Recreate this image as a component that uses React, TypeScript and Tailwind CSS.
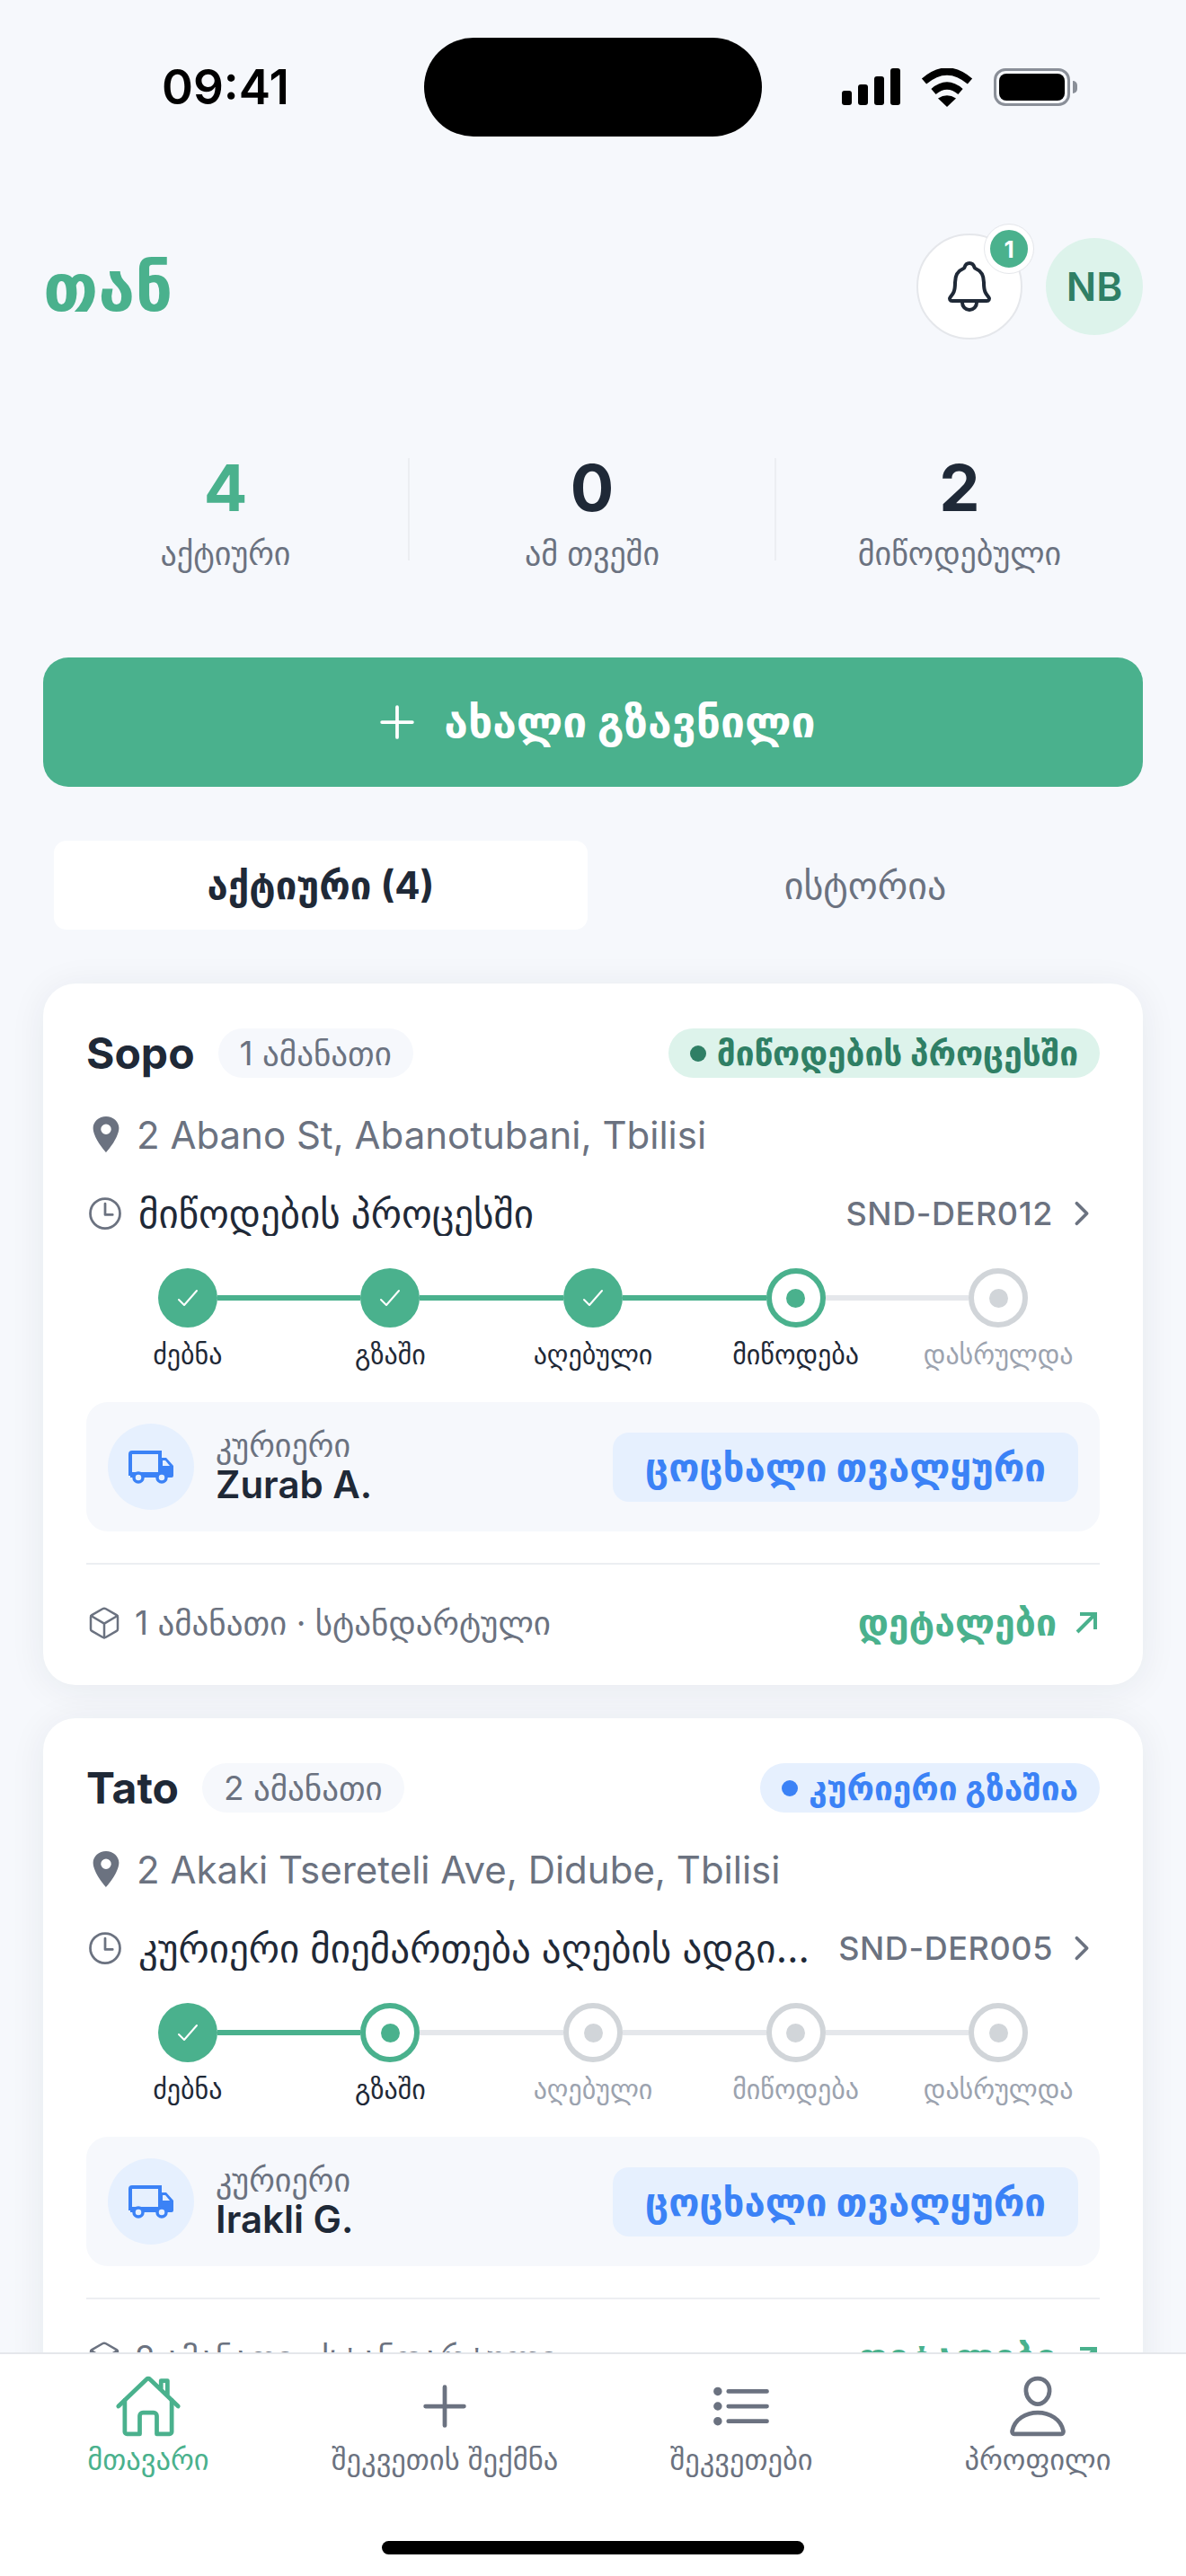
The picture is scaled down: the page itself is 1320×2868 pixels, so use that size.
import { IoAddOutline, IoCheckmarkOutline, IoChevronForward, IoCubeOutline, IoHomeOutline, IoListOutline, IoLocationSharp, IoNotificationsOutline, IoPersonOutline, IoTimeOutline } from "react-icons/io5";

const stepLabels = ["ძებნა", "გზაში", "აღებული", "მიწოდება", "დასრულდა"];

const orders = [
  {
    name: "Sopo",
    count: "1 ამანათი",
    badge: "მიწოდების პროცესში",
    blue: false,
    address: "2 Abano St, Abanotubani, Tbilisi",
    status: "მიწოდების პროცესში",
    code: "SND-DER012",
    active: 3,
    courier: "Zurab A.",
  },
  {
    name: "Tato",
    count: "2 ამანათი",
    badge: "კურიერი გზაშია",
    blue: true,
    address: "2 Akaki Tsereteli Ave, Didube, Tbilisi",
    status: "კურიერი მიემართება აღების ადგილისკენ",
    code: "SND-DER005",
    active: 1,
    courier: "Irakli G.",
  },
];

function StatusBar() {
  return (
    <div className="flex items-center pt-[42px] shrink-0">
      <div className="w-[472px] pl-[180px] text-[53px] font-semibold leading-none text-black">09:41</div>
      <div className="w-[376px] h-[110px] rounded-full bg-black" />
      <div className="flex items-center ml-[89px] gap-[23px]">
        <svg width="65" height="42" viewBox="0 0 65 42" fill="black">
          <rect x="0" y="25" width="11" height="16" rx="3" />
          <rect x="18" y="18" width="11" height="23" rx="3" />
          <rect x="36" y="9" width="11" height="32" rx="3" />
          <rect x="54" y="0" width="11" height="41" rx="3" />
        </svg>
        <svg width="58" height="43" viewBox="0 0 58 43" fill="none" stroke="black" strokeWidth="8">
          <path d="M3.5 14.5Q29 -7.5 54.5 14.5" />
          <path d="M14 26Q29 13 44 26" />
          <path d="M29 43L19 33.5Q29 27 39 33.5Z" fill="black" stroke="none" />
        </svg>
        <div className="flex items-center">
          <div className="w-[85px] h-[42px] rounded-[13px] border-[3px] border-[#8A8F98] p-[3px]">
            <div className="w-full h-full rounded-[8px] bg-black" />
          </div>
          <div className="w-[5px] h-[14px] rounded-r-full bg-[#8A8F98] ml-[3px]" />
        </div>
      </div>
    </div>
  );
}

function Header() {
  return (
    <div className="flex items-center justify-between px-[48px] mt-[108px]">
      <h1 className="text-[74px] font-bold leading-none text-[#4AB18D]">თან</h1>
      <div className="flex items-center gap-[26px]">
        <div className="relative w-[118px] h-[118px] rounded-full bg-white border-2 border-[#E5E7EB] flex items-center justify-center">
          <IoNotificationsOutline className="text-[64px] text-[#1F2937]" />
          <div className="absolute -top-[12px] -right-[14px] w-[54px] h-[54px] rounded-full border-[6px] border-white bg-[#4AB18D] text-white text-[26px] font-bold flex items-center justify-center outline outline-1 outline-[#E5E7EB]">
            1
          </div>
        </div>
        <div className="w-[108px] h-[108px] rounded-full bg-[#DDF3EB] text-[#2F7F65] text-[44px] font-semibold flex items-center justify-center">
          NB
        </div>
      </div>
    </div>
  );
}

function Stats() {
  const items = [
    { value: "4", label: "აქტიური", color: "text-[#4AB18D]" },
    { value: "0", label: "ამ თვეში", color: "text-[#1F2937]" },
    { value: "2", label: "მიწოდებული", color: "text-[#1F2937]" },
  ];
  return (
    <div className="grid grid-cols-3 px-[48px] mt-[132px]">
      {items.map((item, i) => (
        <div key={i} className={`h-[114px] flex flex-col items-center ${i < 2 ? "border-r-2 border-[#ECEEF2]" : ""}`}>
          <div className={`text-[72px] font-bold leading-[66px] ${item.color}`}>{item.value}</div>
          <div className="text-[36px] leading-[40px] mt-[20px] text-[#6B7280] whitespace-nowrap">{item.label}</div>
        </div>
      ))}
    </div>
  );
}

function TruckIcon() {
  return (
    <svg width="50" height="37" viewBox="0 0 50 37" fill="none">
      <path d="M35 28V2H4a2 2 0 0 0-2 2v24" stroke="#3B82F6" strokeWidth="4" />
      <path d="M2 24h34V8h6l8 9v11q0 2-2 2H2z" fill="#3B82F6" />
      <path d="M38 11h3l5 6h-8z" fill="#E6F0FE" />
      <circle cx="11" cy="30" r="5" fill="#E6F0FE" stroke="#3B82F6" strokeWidth="3.5" />
      <circle cx="37" cy="30" r="5" fill="#E6F0FE" stroke="#3B82F6" strokeWidth="3.5" />
    </svg>
  );
}

function Stepper({ active }: { active: number }) {
  return (
    <div className="grid grid-cols-5 mt-[36px]">
      {stepLabels.map((label, i) => {
        const done = i < active;
        const current = i === active;
        return (
          <div key={label} className="flex flex-col items-center">
            <div className="flex items-center w-full">
              <div className={`flex-1 h-[6px] ${i === 0 ? "" : i <= active ? "bg-[#4AB18D]" : "bg-[#E5E7EB]"}`} />
              {done ? (
                <div className="w-[66px] h-[66px] rounded-full bg-[#4AB18D] flex items-center justify-center">
                  <IoCheckmarkOutline className="text-[32px] text-white" />
                </div>
              ) : (
                <div className={`w-[66px] h-[66px] rounded-full border-[6px] bg-white flex items-center justify-center ${current ? "border-[#4AB18D]" : "border-[#D1D5D9]"}`}>
                  <div className={`w-[21px] h-[21px] rounded-full ${current ? "bg-[#4AB18D]" : "bg-[#D1D5D9]"}`} />
                </div>
              )}
              <div className={`flex-1 h-[6px] ${i === 4 ? "" : i < active ? "bg-[#4AB18D]" : "bg-[#E5E7EB]"}`} />
            </div>
            <div className={`text-[30px] leading-[36px] mt-[12px] whitespace-nowrap ${i <= active ? "text-[#1F2937]" : "text-[#9CA3AF]"}`}>{label}</div>
          </div>
        );
      })}
    </div>
  );
}

function OrderCard({ order }: { order: (typeof orders)[number] }) {
  return (
    <div className="bg-white rounded-[36px] shadow-[0_4px_40px_rgba(31,41,55,0.07)] px-[48px] pt-[50px] h-[781px] shrink-0">
      <div className="flex items-center justify-between h-[55px]">
        <div className="flex items-center gap-[26px]">
          <span className="text-[48px] font-bold text-[#1F2937]">{order.name}</span>
          <span className="h-[55px] px-[24px] rounded-full bg-[#F6F8FC] text-[#6B7280] text-[37px] flex items-center whitespace-nowrap">{order.count}</span>
        </div>
        <span className={`h-[55px] px-[24px] rounded-full flex items-center gap-[12px] text-[37px] font-bold whitespace-nowrap ${order.blue ? "bg-[#E6F0FE] text-[#3B82F6]" : "bg-[#DDF3EB] text-[#2F7F65]"}`}>
          <span className={`w-[18px] h-[18px] rounded-full ${order.blue ? "bg-[#3B82F6]" : "bg-[#2F7F65]"}`} />
          {order.badge}
        </span>
      </div>

      <div className="flex items-center mt-[38px] h-[50px]">
        <IoLocationSharp className="text-[46px] text-[#6B7280] ml-[-1px] mr-[11px] shrink-0" />
        <span className="text-[42px] text-[#6B7280] whitespace-nowrap">{order.address}</span>
      </div>

      <div className="flex items-center justify-between mt-[38px] h-[50px]">
        <div className="flex items-center min-w-0">
          <IoTimeOutline className="text-[44px] text-[#6B7280] ml-[-1px] mr-[15px] shrink-0" />
          <span className="text-[43px] leading-[50px] text-[#1F2937] truncate">{order.status}</span>
        </div>
        <div className="flex items-center shrink-0 ml-[24px] text-[#6B7280]">
          <span className="text-[36px] font-medium tracking-[0.6px]">{order.code}</span>
          <IoChevronForward className="text-[40px] ml-[12px]" />
        </div>
      </div>

      <Stepper active={order.active} />

      <div className="flex items-center justify-between mt-[35px] h-[144px] rounded-[24px] bg-[#F6F8FC] px-[24px]">
        <div className="flex items-center gap-[24px]">
          <div className="w-[96px] h-[96px] rounded-full bg-[#E6F0FE] flex items-center justify-center">
            <TruckIcon />
          </div>
          <div>
            <div className="text-[36px] leading-[36px] text-[#6B7280]">კურიერი</div>
            <div className="text-[42px] leading-[44px] mt-[4px] font-semibold text-[#1F2937]">{order.courier}</div>
          </div>
        </div>
        <div className="h-[77px] px-[36px] rounded-[18px] bg-[#E6F0FE] text-[#3B82F6] text-[42px] font-bold flex items-center whitespace-nowrap">
          ცოცხალი თვალყური
        </div>
      </div>

      <div className="border-t-2 border-[#ECEEF2] mt-[35px] pt-[40px]">
        <div className="h-[50px] flex items-center justify-between">
          <div className="flex items-center text-[#6B7280] text-[37px] whitespace-nowrap">
            <IoCubeOutline className="text-[40px] mr-[14px]" />
            {order.count} · სტანდარტული
          </div>
          <div className="flex items-center text-[#4AB18D] text-[41px] font-bold whitespace-nowrap">
            დეტალები
            <svg width="26" height="26" viewBox="0 0 26 26" fill="none" stroke="#4AB18D" strokeWidth="4" className="ml-[20px] mr-[2px]">
              <path d="M3 23L23 3M6 3h17v17" />
            </svg>
          </div>
        </div>
      </div>
    </div>
  );
}

function BottomNav() {
  const tabs = [
    { label: "მთავარი", Icon: IoHomeOutline, on: true },
    { label: "შეკვეთის შექმნა", Icon: IoAddOutline, on: false },
    { label: "შეკვეთები", Icon: IoListOutline, on: false },
    { label: "პროფილი", Icon: IoPersonOutline, on: false },
  ];
  return (
    <div className="relative z-10 shrink-0 bg-white border-t-2 border-[#E5E7EB] h-[249px] flex flex-col">
      <div className="grid grid-cols-4 pt-[20px]">
        {tabs.map(({ label, Icon, on }) => (
          <div key={label} className={`flex flex-col items-center ${on ? "text-[#4AB18D]" : "text-[#6B7280]"}`}>
            <Icon className="text-[76px]" />
            <span className="text-[32.5px] leading-[36px] mt-[4px] whitespace-nowrap">{label}</span>
          </div>
        ))}
      </div>
      <div className="mt-auto mb-[24px] mx-auto w-[470px] h-[15px] rounded-full bg-black" />
    </div>
  );
}

export default function App() {
  return (
    <div className="w-[1320px] h-[2868px] overflow-hidden bg-[#F6F8FC] flex flex-col font-['Inter','DejaVu_Sans',sans-serif]">
      <StatusBar />
      <main className="flex-1 min-h-0 overflow-hidden flex flex-col">
        <Header />
        <Stats />
        <div className="mx-[48px] mt-[108px] h-[144px] rounded-[28px] bg-[#4AB18D] text-white flex items-center justify-center gap-[22px] shrink-0">
          <IoAddOutline className="text-[60px]" />
          <span className="text-[48px] font-bold">ახალი გზავნილი</span>
        </div>
        <div className="flex gap-[12px] mx-[48px] px-[12px] mt-[60px] shrink-0">
          <div className="flex-1 h-[99px] rounded-[14px] bg-white text-[#1F2937] text-[42px] font-bold flex items-center justify-center">აქტიური (4)</div>
          <div className="flex-1 h-[99px] text-[#6B7280] text-[42px] flex items-center justify-center">ისტორია</div>
        </div>
        <div className="flex flex-col gap-[37px] mx-[48px] mt-[60px]">
          {orders.map((o) => (
            <OrderCard key={o.code} order={o} />
          ))}
        </div>
      </main>
      <BottomNav />
    </div>
  );
}
